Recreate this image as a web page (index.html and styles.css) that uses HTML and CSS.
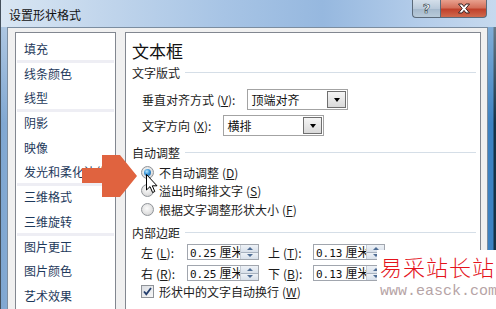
FILE: index.html
```html
<!DOCTYPE html>
<html lang="zh-CN">
<head>
  <meta charset="UTF-8" />
  <title>设置形状格式</title>
  <link rel="stylesheet" href="styles.css">
</head>
<body>

  <div class="window">

    <!-- Aero title bar -->
    <div class="titlebar">
      <span class="title">设置形状格式</span>
      <div class="caption-btns">
        <span class="cap-btn help">?</span>
        <span class="cap-btn close">
          <svg width="14" height="11" viewBox="0 0 14 11">
            <path d="M1.5 1 L5 1 L7 3.6 L9 1 L12.5 1 L8.8 5.5 L12.5 10 L9 10 L7 7.4 L5 10 L1.5 10 L5.2 5.5 Z" fill="#fff" stroke="#3b2222" stroke-width="1"/>
          </svg>
        </span>
      </div>
    </div>

    <div class="client">

      <!-- left category list -->
      <ul class="nav-list">
        <li>填充</li>
        <li class="sep"></li>
        <li>线条颜色</li>
        <li>线型</li>
        <li class="sep"></li>
        <li>阴影</li>
        <li>映像</li>
        <li>发光和柔化边缘</li>
        <li class="sep"></li>
        <li>三维格式</li>
        <li>三维旋转</li>
        <li class="sep"></li>
        <li>图片更正</li>
        <li>图片颜色</li>
        <li>艺术效果</li>
      </ul>

      <!-- right settings panel -->
      <div class="panel">
        <h2>文本框</h2>

        <div class="group-head"><span>文字版式</span><i></i></div>
        <div class="form-row row-first">
          <span class="label">垂直对齐方式<span class="key">(<u>V</u>)</span>:</span>
          <div class="combo">
            <span class="combo-text">顶端对齐</span>
            <span class="drop-btn"></span>
          </div>
        </div>
        <div class="form-row">
          <span class="label">文字方向<span class="key">(<u>X</u>)</span>:</span>
          <div class="combo">
            <span class="combo-text">横排</span>
            <span class="drop-btn"></span>
          </div>
        </div>

        <div class="group-head head-autofit"><span>自动调整</span><i></i></div>
        <div class="radios">
          <label class="radio-row"><span class="radio checked"></span>不自动调整<span class="key">(<u>D</u>)</span></label>
          <label class="radio-row"><span class="radio"></span>溢出时缩排文字<span class="key">(<u>S</u>)</span></label>
          <label class="radio-row"><span class="radio"></span>根据文字调整形状大小<span class="key">(<u>F</u>)</span></label>
        </div>

        <div class="group-head head-margins"><span>内部边距</span><i></i></div>
        <div class="spin-grid">
          <span class="label">左<span class="key">(<u>L</u>)</span>:</span>
          <div class="spin"><span class="spin-text"><span class="num">0.25</span>厘米</span><span class="spinner"><b class="up"></b><b class="down"></b></span></div>
          <span class="label">上<span class="key">(<u>T</u>)</span>:</span>
          <div class="spin"><span class="spin-text"><span class="num">0.13</span>厘米</span><span class="spinner"><b class="up"></b><b class="down"></b></span></div>

          <span class="label">右<span class="key">(<u>R</u>)</span>:</span>
          <div class="spin"><span class="spin-text"><span class="num">0.25</span>厘米</span><span class="spinner"><b class="up"></b><b class="down"></b></span></div>
          <span class="label">下<span class="key">(<u>B</u>)</span>:</span>
          <div class="spin"><span class="spin-text"><span class="num">0.13</span>厘米</span><span class="spinner"><b class="up"></b><b class="down"></b></span></div>
        </div>

        <label class="check-row">
          <span class="checkbox">
            <svg width="11" height="11" viewBox="0 0 11 11">
              <path d="M2 5.5 L4.3 8.2 L9 2" fill="none" stroke="#243f6e" stroke-width="1.8"/>
            </svg>
          </span>
          形状中的文字自动换行<span class="key">(<u>W</u>)</span>
        </label>
      </div>
    </div>

    <!-- callout arrow drawn over the dialog -->
    <svg class="callout" width="60" height="46" viewBox="80 153 60 46">
      <polygon points="82,168 102,168 102,155 120,155 137,176 120,197 102,197 102,183 82,183" fill="#e0633f"/>
    </svg>

    <!-- mouse pointer -->
    <svg class="pointer" width="13" height="20" viewBox="0 0 13 20">
      <path d="M0.5 0.5 L0.5 16 L4 12.6 L6.6 18.5 L8.8 17.5 L6.3 11.8 L11 11.8 Z" fill="#fff" stroke="#000" stroke-width="1"/>
    </svg>

    <!-- site watermark -->
    <div class="watermark">
      <div class="wm-cn">易采站长站</div>
      <div class="wm-url">www.easck.com</div>
    </div>

  </div>

</body>
</html>
```

FILE: styles.css
```css
:root {
  --list-text: #1e395b;
  --text: #1c1c1c;
  --box-border: #828790;
  --rule: #d5dee7;
}

body {
  margin: 0;
  font-family: "Noto Sans CJK SC", "Noto Sans", sans-serif;
  font-size: 12px;
  color: var(--text);
}

u {
  text-decoration: underline;
  text-underline-offset: 1px;
}

/* mnemonic "(X)" after a label */
.key {
  margin-left: 3px;
}

.window {
  position: relative;
  width: 496px;
  height: 309px;
  overflow: hidden;
  box-sizing: border-box;
  border-left: 1px solid #44505c;
  background:
    linear-gradient(180deg, rgba(255,255,255,0.45) 0, rgba(255,255,255,0) 40%),
    linear-gradient(90deg, #7ea6d1 0, #86abd4 8px, #9fbde0 50%, #3d82c2 488px, #3d82c2 492px, #163246 493px);
}

/* Title bar */
.titlebar {
  height: 27px;
  display: flex;
  justify-content: space-between;
  align-items: flex-start;
  padding-left: 8px;
  padding-right: 9px;
  background: linear-gradient(90deg, #d9e6f3 0, #c2d6ec 20%, #a7c4e5 45%, #96b8df 65%, #b4cdea 85%, #c6d9ee 100%);
}

.title {
  margin-top: 5px;
  line-height: 20px;
  font-size: 12px;
  color: #111;
}

.caption-btns {
  display: flex;
}

.cap-btn {
  height: 18px;
  box-sizing: border-box;
  display: flex;
  align-items: center;
  justify-content: center;
  border: 1px solid #5b6a7a;
  border-top: none;
}

.help {
  width: 28px;
  border-right: none;
  border-bottom-left-radius: 4px;
  background: linear-gradient(180deg, #d4dfea 0, #b9c9da 50%, #a4b8cc 51%, #b8cad9 100%);
  font-family: "DejaVu Sans", sans-serif;
  font-weight: bold;
  font-size: 13px;
  color: #fff;
  -webkit-text-stroke: 0.6px #2d3a48;
}

.close {
  width: 47px;
  border-bottom-right-radius: 4px;
  background: linear-gradient(180deg, #e8a08e 0, #d4705b 45%, #c0412b 55%, #d06a4e 100%);
}

/* Dialog client area */
.client {
  width: 481px;
  height: 282px;
  margin-left: 6px;
  box-sizing: border-box;
  border: 1px solid #7b8da0;
  border-bottom: none;
  background: #f0f0f0;
  padding: 4px 6px 0 7px;
  display: flex;
  gap: 9px;
}

.nav-list {
  width: 101px;
  height: 290px;
  flex: none;
  box-sizing: border-box;
  margin: 0;
  padding: 4px 0 0;
  list-style: none;
  background: #fff;
  border: 1px solid var(--box-border);
  color: var(--list-text);
}

.nav-list li {
  height: 24.7px;
  line-height: 24.7px;
  padding-left: 8px;
  white-space: nowrap;
  overflow: hidden;
}

.nav-list li.sep {
  height: 3px;
  margin: -2px 1px -1px;
  padding: 0;
  background: #eeeef4;
}

.panel {
  width: 356px;
  height: 290px;
  flex: none;
  box-sizing: border-box;
  background: #fff;
  border: 1px solid var(--box-border);
  padding: 7px 4px 0 6px;
}

.panel h2 {
  margin: 0;
  font-size: 17px;
  line-height: 22px;
  font-weight: normal;
  color: #111;
}

.group-head {
  height: 18px;
  margin-top: 1px;
  display: flex;
  align-items: center;
  gap: 5px;
}

.group-head i {
  flex: 1;
  height: 1px;
  background: var(--rule);
}

.head-autofit {
  margin-top: 7px;
}

.head-margins {
  margin-top: 4.5px;
}

.form-row {
  display: flex;
  align-items: center;
  gap: 12px;
  height: 21px;
  margin-top: 5px;
  padding-left: 10px;
}

.form-row.row-first {
  margin-top: 8px;
}

.combo {
  width: 101px;
  height: 21px;
  box-sizing: border-box;
  border: 1px solid #a3a3a3;
  display: flex;
  align-items: center;
  justify-content: space-between;
  background: #fff;
}

.combo-text {
  padding-left: 3px;
  color: #111;
}

.drop-btn {
  width: 19px;
  height: 17px;
  margin-right: 1px;
  box-sizing: border-box;
  border: 1px solid #6f6f6f;
  background: linear-gradient(180deg, #f5f5f5, #d9d9d9);
  display: flex;
  align-items: center;
  justify-content: center;
}

.drop-btn::after {
  content: "";
  border-left: 3.5px solid transparent;
  border-right: 3.5px solid transparent;
  border-top: 4px solid #000;
}

/* Radio group */
.radios {
  margin-top: 2px;
  padding-left: 9px;
}

.radio-row {
  height: 18.5px;
  display: flex;
  align-items: center;
}

.radio {
  width: 13px;
  height: 13px;
  margin-right: 5px;
  box-sizing: border-box;
  border-radius: 50%;
  border: 1px solid #8f9398;
  background: radial-gradient(circle at 45% 40%, #fbfbfb 0, #e2e2e2 55%, #c9c9c9 100%);
  display: flex;
  align-items: center;
  justify-content: center;
}

.radio.checked::after {
  content: "";
  width: 7px;
  height: 7px;
  border-radius: 50%;
  background: radial-gradient(circle at 40% 35%, #b4e6ff 0, #3a95d8 45%, #0f4f8e 100%);
}

/* Inner margins */
.spin-grid {
  margin-top: 3px;
  padding-left: 9px;
  display: grid;
  grid-template-columns: 46px 81px 45px 72px;
  grid-auto-rows: 16px;
  row-gap: 5px;
  align-items: center;
}

.spin {
  width: 72px;
  height: 16px;
  box-sizing: border-box;
  border: 1px solid #a1a6ae;
  display: flex;
  overflow: hidden;
  background: #fff;
}

.spin-text {
  flex: 1;
  padding-left: 2px;
  line-height: 14px;
  white-space: nowrap;
  overflow: hidden;
  color: #111;
}

.spin-text .num {
  font-family: "DejaVu Sans Mono", monospace;
  font-size: 11px;
  margin-right: 3px;
}

.spinner {
  width: 17px;
  flex: none;
  display: flex;
  flex-direction: column;
  border-left: 1px solid #c4cbd4;
}

.spinner b {
  flex: 1;
  display: flex;
  align-items: center;
  justify-content: center;
  background: linear-gradient(180deg, #eef2f7, #d8e0ea);
}

.spinner b.up {
  border-bottom: 1px solid #a8b2bf;
}

.spinner b.up::after {
  content: "";
  border-left: 3px solid transparent;
  border-right: 3px solid transparent;
  border-bottom: 3px solid #4f6d94;
}

.spinner b.down::after {
  content: "";
  border-left: 3px solid transparent;
  border-right: 3px solid transparent;
  border-top: 3px solid #4f6d94;
}

.check-row {
  margin-top: 2px;
  height: 16px;
  padding-left: 9px;
  display: flex;
  align-items: center;
}

.checkbox {
  width: 13px;
  height: 13px;
  margin-right: 5px;
  box-sizing: border-box;
  border: 1px solid #8f9398;
  background: linear-gradient(135deg, #dadde2, #f7f7f7);
  display: flex;
  align-items: center;
  justify-content: center;
}

/* Overlays */
.callout {
  position: absolute;
  left: 79px;
  top: 153px;
}

.pointer {
  position: absolute;
  left: 145px;
  top: 174px;
}

.watermark {
  position: absolute;
  left: 376px;
  top: 250px;
  right: 0;
  bottom: 0;
  background: #fff;
  padding: 3px 0 0 3px;
}

.wm-cn {
  font-size: 22px;
  line-height: 26px;
  letter-spacing: 1px;
  color: #e4131c;
  font-weight: 300;
  white-space: nowrap;
}

.wm-url {
  margin-top: 5px;
  font-family: "Liberation Mono", monospace;
  font-size: 15px;
  line-height: 16px;
  color: #b6a4a6;
  white-space: nowrap;
}
```
